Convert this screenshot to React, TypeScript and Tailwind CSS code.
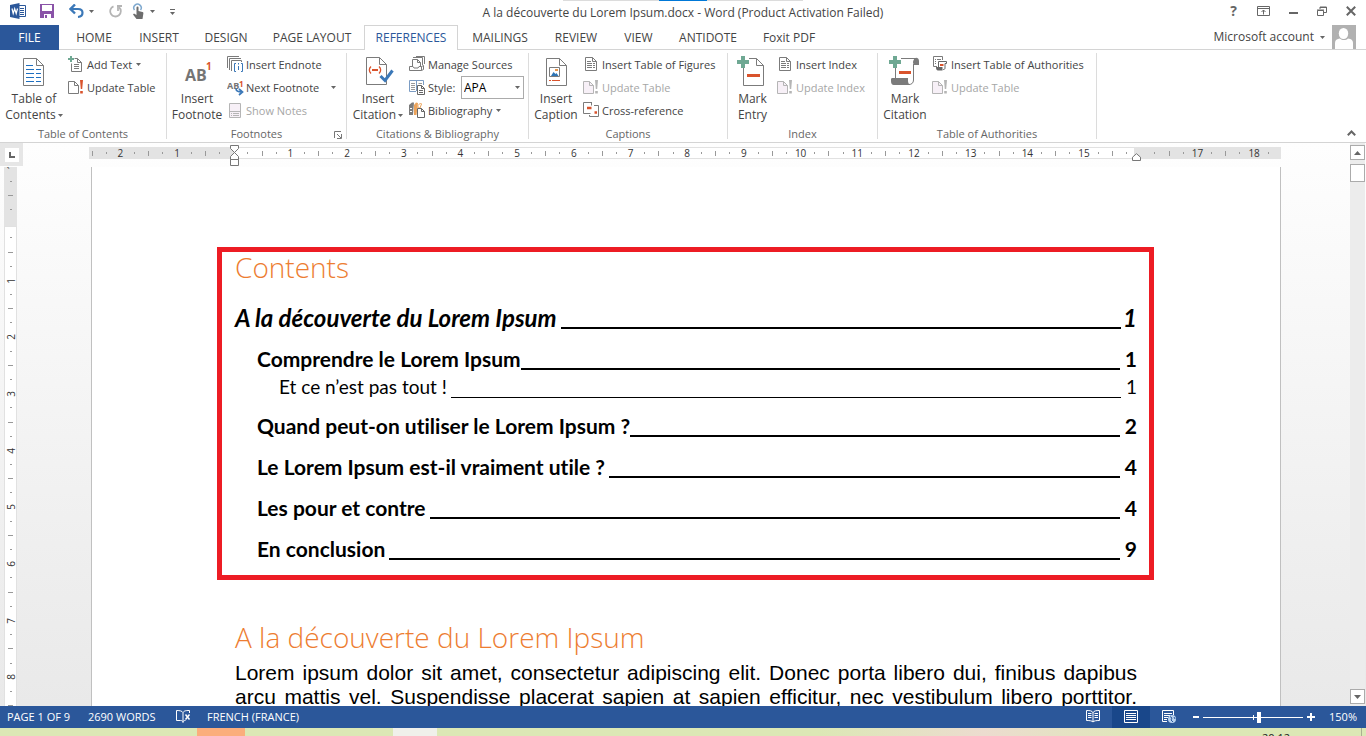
import type { ReactNode } from 'react';

const tabs = [
  { name: 'HOME', width: 'w-[64px]' },
  { name: 'INSERT', width: 'w-[66px]' },
  { name: 'DESIGN', width: 'w-[68px]' },
  { name: 'PAGE LAYOUT', width: 'w-[104px]' },
  { name: 'REFERENCES', width: 'w-[94px]' },
  { name: 'MAILINGS', width: 'w-[84px]' },
  { name: 'REVIEW', width: 'w-[68px]' },
  { name: 'VIEW', width: 'w-[57px]' },
  { name: 'ANTIDOTE', width: 'w-[82px]' },
  { name: 'Foxit PDF', width: 'w-[80px]' },
];

const toc = [
  { level: 1, title: 'A la découverte du Lorem Ipsum', page: 1, gap: true },
  { level: 2, title: 'Comprendre le Lorem Ipsum', page: 1, gap: false },
  { level: 3, title: 'Et ce n’est pas tout !', page: 1, gap: true },
  { level: 2, title: 'Quand peut-on utiliser le Lorem Ipsum ?', page: 2, gap: false },
  { level: 2, title: 'Le Lorem Ipsum est-il vraiment utile ?', page: 4, gap: true },
  { level: 2, title: 'Les pour et contre', page: 4, gap: true },
  { level: 2, title: 'En conclusion', page: 9, gap: true },
];

const levelStyles: Record<number, string> = {
  1: 'h-[41px] text-[24px] font-bold italic',
  2: 'h-[41px] pl-[22px] text-[21px] font-bold',
  3: 'h-[26px] pb-[10px] pl-[44px] text-[19px]',
};

// ---- Icons ----

function Svg({ w, h, children }: { w: number; h: number; children: ReactNode }) {
  return (
    <svg width={w} height={h} viewBox={`0 0 ${w} ${h}`} fill="none" className="shrink-0" aria-hidden="true">
      {children}
    </svg>
  );
}

function Caret() {
  return (
    <svg width="5" height="3" viewBox="0 0 5 3" className="shrink-0" aria-hidden="true">
      <path d="M0 0h5L2.5 3z" fill="#666" />
    </svg>
  );
}

function WordLogo() {
  return (
    <Svg w={16} h={17}>
      <path d="M8.5 2.5h7v11h-7z" fill="#fff" stroke="#2b579a" />
      <path d="M10 5.500h4M10 7.500h4M10 9.500h4M10 11.500h4" stroke="#2b579a" />
      <path d="M0 2l9.500-2v16L0 14z" fill="#2b579a" />
      <path d="M2 5.500l1.200 5 1.500-4.700 1.500 4.700 1.300-5" stroke="#fff" strokeWidth="1.200" />
    </Svg>
  );
}

function SaveIcon() {
  return (
    <Svg w={14} h={15}>
      <path d="M0 0h14v14H0z" fill="#8a53a8" />
      <path d="M2 1h10v6H2zM4 10h7v4H4z" fill="#fff" />
      <path d="M5 11h2v3H5z" fill="#8a53a8" />
    </Svg>
  );
}

function UndoIcon() {
  return (
    <Svg w={15} h={15}>
      <path d="M1.500 5h7.500c6 0 6 7.500 0 8" stroke="#3b78b8" strokeWidth="2.200" />
      <path d="M6 .5L1.500 5 6 9.500" stroke="#3b78b8" strokeWidth="2.400" />
    </Svg>
  );
}

function RepeatIcon() {
  return (
    <Svg w={14} h={15}>
      <path d="M4.500 2.300a5.300 5.300 0 1 0 5.500.9" stroke="#b5b5b5" strokeWidth="1.800" />
      <path d="M8 2h5M9 1.500V7" stroke="#b5b5b5" strokeWidth="1.800" />
    </Svg>
  );
}

function TouchIcon() {
  return (
    <Svg w={12} h={17}>
      <path d="M2.500 7a3.700 3.700 0 1 1 6 0" stroke="#7fa9cf" strokeWidth="1.500" />
      <path d="M4.500 4.500a1 1 0 0 1 2 0V8l4 1c1 .3 1 1 .8 2l-.8 5H4.500L1 11.500l1-1L4.500 12z" fill="#6d6d6d" />
    </Svg>
  );
}

function ContentsIcon() {
  return (
    <Svg w={22} h={28}>
      <path d="M.5.500h13l7 7v20H.5z" fill="#fff" stroke="#7b7b7b" />
      <path d="M13.500.5v7h7" stroke="#7b7b7b" />
      <path d="M3 7.500h7M3 11.500h8M3 15.500h8M3 19.500h8M3 23.500h8" stroke="#1f6fbf" />
      <path d="M13 11.500h5M13 15.500h5M13 19.500h5M13 23.500h5" stroke="#1f6fbf" />
    </Svg>
  );
}

function AddTextIcon() {
  return (
    <Svg w={17} h={17}>
      <path d="M6.500 2.500h3l4 4v9h-10v-8" stroke="#7b7b7b" />
      <path d="M9.500 2.500v4h4M6 8.500h5M6 10.500h5M6 12.500h5" stroke="#7b7b7b" />
      <path d="M3 0v6M0 3h6" stroke="#6fa893" strokeWidth="2" />
    </Svg>
  );
}

function UpdateIcon({ muted = false }: { muted?: boolean }) {
  return (
    <Svg w={17} h={15}>
      <path d="M.5 1.500h6l4 4v8H.5z" fill={muted ? '#f7f0f7' : '#fff'} stroke={muted ? '#b5b5b5' : '#7b7b7b'} />
      <path d="M6.500 1.500v4h4" stroke={muted ? '#b5b5b5' : '#7b7b7b'} />
      <path d="M12 0h3l-.8 9h-1.400zM12.200 11h2.600v2.500h-2.600z" fill={muted ? '#b5b5b5' : '#d9532c'} />
    </Svg>
  );
}

function FootnoteIcon() {
  return (
    <Svg w={30} h={26}>
      <text x="3" y="22" fontFamily="Open Sans, sans-serif" fontSize="16" fontWeight="700" fill="#757575">AB</text>
      <text x="24" y="11" fontFamily="Open Sans, sans-serif" fontSize="10" fontWeight="700" fill="#d9532c">1</text>
    </Svg>
  );
}

function EndnoteIcon() {
  return (
    <Svg w={17} h={17}>
      <path d="M.5 12V.5H12M2.500 14V2.500H14M4.500 15V4.500h10V6" stroke="#7b7b7b" />
      <path d="M9 7.500H7.500v8H9M14 7.500h1.500v8H14M11.500 7v1.500M11.500 10v4" stroke="#3b78b8" />
    </Svg>
  );
}

function NextFootnoteIcon() {
  return (
    <Svg w={17} h={17}>
      <text x="0" y="10" fontFamily="Open Sans, sans-serif" fontSize="9" fontWeight="700" fill="#757575">AB</text>
      <text x="12" y="8" fontFamily="Open Sans, sans-serif" fontSize="8" fontWeight="700" fill="#d9532c">1</text>
      <path d="M9 9.500c0 3 2 3.500 6 3.500M12 10l3.500 3-3.500 3" stroke="#3b78b8" strokeWidth="1.700" />
    </Svg>
  );
}

function NotesIcon() {
  return (
    <Svg w={13} h={15}>
      <path d="M.5.500h11v14H.5z" fill="#f7f0f7" stroke="#b5b5b5" />
      <path d="M0 8.500h12M2 10.500h1M4 10.500h6M2 12.500h1M4 12.500h6" stroke="#b5b5b5" />
    </Svg>
  );
}

function CitationIcon() {
  return (
    <Svg w={32} h={30}>
      <g transform="translate(4 0)">
        <path d="M.5.500h13l7 7v20H.5z" fill="#fff" stroke="#7b7b7b" />
        <path d="M13.500.5v7h7" stroke="#7b7b7b" />
        <path d="M5 9.500c-2.200 2-2.200 5 0 7M13 9.500c2.200 2 2.200 5 0 7" stroke="#d9532c" strokeWidth="1.300" />
        <path d="M6 13h6" stroke="#d9532c" strokeWidth="2" />
        <path d="M14.500 19l4.500 4.500 7.500-10" stroke="#3b78b8" strokeWidth="3" />
      </g>
    </Svg>
  );
}

function SourcesIcon() {
  return (
    <Svg w={17} h={17}>
      <path d="M3.500 10V3.500h5l3 3V10M8.500 3.500v3h3M4 1.500h9.500V9M7 .5h8.500V8" stroke="#7b7b7b" />
      <path d="M4 10.500H.5v4h12v-4H10l-1 1.500H5l-1-1.500M12.500 10.500l2-1v4l-2 1" stroke="#7b7b7b" />
    </Svg>
  );
}

function StyleIcon() {
  return (
    <Svg w={17} h={17}>
      <path d="M8 1.500H.5v11H7M7.500 2v10M8 1.500h6.500V6" stroke="#7b9cc4" />
      <path d="M2 4.500h4M2 6.500h4M2 8.500h4M2 10.500h4M9.500 4.500H13" stroke="#999" />
      <path d="M8.500 6.500h4l3 3v6h-7zM12.500 6.500v3h3M10 11.500h4M10 13.500h4" fill="#fff" stroke="#666" />
    </Svg>
  );
}

function BibliographyIcon() {
  return (
    <Svg w={17} h={17}>
      <path d="M0 3l3-2.500h2L4 13H0z" fill="#7b7b7b" />
      <path d="M1 6.500h2M1 9.500h2" stroke="#fff" />
      <path d="M5 3l2-2.500L9 1 7.500 13H5z" fill="#eca35a" />
      <path d="M9 3.500L11.500 1l1 1-1.500 4H9z" stroke="#eca35a" />
      <path d="M8.500 6.500h4l3 3v6h-7zM12.500 6.500v3h3" fill="#fff" stroke="#666" />
    </Svg>
  );
}

function CaptionIcon() {
  return (
    <Svg w={24} h={28}>
      <g transform="translate(2 0)">
        <path d="M.5.500h13l7 7v20H.5z" fill="#fff" stroke="#7b7b7b" />
        <path d="M13.500.5v7h7" stroke="#7b7b7b" />
        <path d="M3.500 9.500h10v9h-10z" fill="#fff" stroke="#7b7b7b" />
        <path d="M5 18l2.500-4 2 2 1-1 2 3z" fill="#2f75b5" />
        <path d="M9 11h3v2H9z" fill="#e8964a" />
        <path d="M3 22.500h2M6 22.500h8" stroke="#d9532c" />
      </g>
    </Svg>
  );
}

function FiguresIcon() {
  return (
    <Svg w={13} h={15}>
      <path d="M.5.500h7l4 4v9H.5z" fill="#fff" stroke="#7b7b7b" />
      <path d="M7.500.5v4h4M2 4.500h4M2 6.500h5M8 6.500h2M2 8.500h5M8 8.500h2M2 10.500h5M8 10.500h2" stroke="#7b7b7b" />
    </Svg>
  );
}

function CrossRefIcon() {
  return (
    <Svg w={17} h={17}>
      <path d="M9 .5H.5v11h7M11 3.500h4.500v11h-9V13M8.500.5v3" stroke="#7b7b7b" />
      <path d="M4 6h4.500M11.500 10.500H14" stroke="#d9532c" strokeWidth="2.500" />
    </Svg>
  );
}

function MarkEntryIcon() {
  return (
    <Svg w={31} h={32}>
      <path d="M12 2.500h7.500l7 7v20H6.500V12" stroke="#7b7b7b" />
      <path d="M19.500 2.500v7h7" stroke="#7b7b7b" />
      <path d="M6 0v12M0 6h12" stroke="#6fa893" strokeWidth="4" />
      <path d="M10 19.500h13" stroke="#d9532c" strokeWidth="3" />
    </Svg>
  );
}

function MarkCitationIcon() {
  return (
    <Svg w={32} h={32}>
      <path d="M12 2.500h14.500c-2 1-2 3-2 5V24c0 3-2 4.500-4.500 4.500H6M6.500 12v10" stroke="#7b7b7b" />
      <path d="M25 9V4c0-3 5-3 5 1v4zM2 23c0-1 1-1 2-1h15v3c0 2 1 3 2 4H6c-4 0-4-2-4-6z" fill="#7b7b7b" />
      <path d="M6 0v12M0 6h12" stroke="#6fa893" strokeWidth="4" />
      <path d="M10 16.500h12" stroke="#d9532c" strokeWidth="3" />
    </Svg>
  );
}

function AuthoritiesIcon() {
  return (
    <Svg w={15} h={17}>
      <path d="M4 10.500H.5V.5h9V4M2 3.500h1M4 3.500h4M2 5.500h1M2 7.500h1" stroke="#7b7b7b" />
      <path d="M5.500 11V5.500h8v2H12V12c0 1.500-1 1.500-2 1.500" stroke="#666" />
      <path d="M3 11h6.500v3.500H5C3.500 14.500 3 13 3 11z" fill="#666" />
      <path d="M7 9h3.500" stroke="#d9532c" strokeWidth="2" />
    </Svg>
  );
}

// ---- Ribbon ----

function Group({ label, width, launcher, children }: { label: string; width: string; launcher?: boolean; children: ReactNode }) {
  return (
    <section className={`flex flex-col border-r border-[#dcdcdc] ${width}`}>
      <div className="flex h-[75px] shrink-0 items-start">{children}</div>
      <div className="relative text-center text-[11px] leading-[11px] text-[#666]">
        {label}
        {launcher && (
          <button aria-label={`${label} options`} className="absolute right-[4px] top-[3px]">
            <Svg w={8} h={8}>
              <path d="M.5 7V.5H7M3 3l4 4M7.500 3v4.500H3" stroke="#777" />
            </Svg>
          </button>
        )}
      </div>
    </section>
  );
}

function BigButton({ icon, lines, width, caret }: { icon: ReactNode; lines: [string, string]; width: string; caret?: boolean }) {
  return (
    <button className={`flex shrink-0 flex-col items-center text-[12px] leading-[16px] ${width}`}>
      <span className="flex h-[38px] items-center justify-center">{icon}</span>
      <span>{lines[0]}</span>
      <span className="flex items-center gap-[2px] whitespace-nowrap">
        {lines[1]}
        {caret && <Caret />}
      </span>
    </button>
  );
}

function SmallButton({ icon, label, caret, disabled }: { icon: ReactNode; label: string; caret?: boolean; disabled?: boolean }) {
  return (
    <button disabled={disabled} className="flex h-[23px] items-center gap-[2px] whitespace-nowrap disabled:text-[#a6a6a6]">
      <span className="flex w-[17px] justify-center">{icon}</span>
      <span className="pt-px">{label}</span>
      {caret && <span className="pl-[2px]"><Caret /></span>}
    </button>
  );
}

function Column({ children }: { children: ReactNode }) {
  return <div className="flex flex-col items-start text-[11px]">{children}</div>;
}

function Ribbon() {
  return (
    <div className="flex h-[93px] shrink-0 border-b border-[#d4d4d4] bg-white py-[3px] text-[#444]">
      <Group label="Table of Contents" width="w-[167px]">
        <BigButton icon={<ContentsIcon />} lines={['Table of', 'Contents']} width="w-[68px]" caret />
        <Column>
          <SmallButton icon={<AddTextIcon />} label="Add Text" caret />
          <SmallButton icon={<UpdateIcon />} label="Update Table" />
        </Column>
      </Group>
      <Group label="Footnotes" width="w-[180px]" launcher>
        <BigButton icon={<FootnoteIcon />} lines={['Insert', 'Footnote']} width="w-[60px]" />
        <Column>
          <SmallButton icon={<EndnoteIcon />} label="Insert Endnote" />
          <div className="flex items-center gap-3">
            <SmallButton icon={<NextFootnoteIcon />} label="Next Footnote" />
            <Caret />
          </div>
          <SmallButton icon={<NotesIcon />} label="Show Notes" disabled />
        </Column>
      </Group>
      <Group label="Citations & Bibliography" width="w-[182px]">
        <BigButton icon={<CitationIcon />} lines={['Insert', 'Citation']} width="w-[62px]" caret />
        <Column>
          <SmallButton icon={<SourcesIcon />} label="Manage Sources" />
          <div className="flex h-[23px] items-center gap-[2px]">
            <span className="flex w-[17px] justify-center"><StyleIcon /></span>
            <label htmlFor="style" className="w-[31px] pt-px">Style:</label>
            <div className="relative">
              <select id="style" className="h-[23px] w-[63px] appearance-none border border-[#ababab] bg-white pl-[2px] text-[12px] text-black">
                <option>APA</option>
              </select>
              <span className="pointer-events-none absolute right-[4px] top-[10px]"><Caret /></span>
            </div>
          </div>
          <SmallButton icon={<BibliographyIcon />} label="Bibliography" caret />
        </Column>
      </Group>
      <Group label="Captions" width="w-[199px]">
        <BigButton icon={<CaptionIcon />} lines={['Insert', 'Caption']} width="w-[54px]" />
        <Column>
          <SmallButton icon={<FiguresIcon />} label="Insert Table of Figures" />
          <SmallButton icon={<UpdateIcon muted />} label="Update Table" disabled />
          <SmallButton icon={<CrossRefIcon />} label="Cross-reference" />
        </Column>
      </Group>
      <Group label="Index" width="w-[150px]">
        <BigButton icon={<MarkEntryIcon />} lines={['Mark', 'Entry']} width="w-[49px]" />
        <Column>
          <SmallButton icon={<FiguresIcon />} label="Insert Index" />
          <SmallButton icon={<UpdateIcon muted />} label="Update Index" disabled />
        </Column>
      </Group>
      <Group label="Table of Authorities" width="w-[219px]">
        <BigButton icon={<MarkCitationIcon />} lines={['Mark', 'Citation']} width="w-[54px]" />
        <Column>
          <SmallButton icon={<AuthoritiesIcon />} label="Insert Table of Authorities" />
          <SmallButton icon={<UpdateIcon muted />} label="Update Table" disabled />
        </Column>
      </Group>
      <button aria-label="Collapse ribbon" className="mb-[3px] ml-auto mr-[10px] self-end">
        <Svg w={9} h={6}>
          <path d="M.8 5.200l3.700-3.700 3.700 3.700" stroke="#666" strokeWidth="2" />
        </Svg>
      </button>
    </div>
  );
}

function TitleBar() {
  return (
    <header className="relative flex h-[25px] shrink-0 items-center bg-white">
      <div className="absolute left-[563px] top-0 flex h-px w-[240px] justify-center bg-[#dcdcdc]">
        <div className="h-px w-12 bg-[#0078d7]" />
      </div>
      <div className="flex flex-1 items-center pb-[3px] pl-[10px]">
        <WordLogo />
        <button aria-label="Save" className="ml-[14px]"><SaveIcon /></button>
        <button aria-label="Undo" className="ml-[15px] flex items-center gap-[5px]"><UndoIcon /><Caret /></button>
        <button aria-label="Repeat" className="ml-[15px]"><RepeatIcon /></button>
        <button aria-label="Touch mode" className="ml-[9px] flex items-center gap-[6px]"><TouchIcon /><Caret /></button>
        <button aria-label="Customize toolbar" className="ml-[15px]">
          <Svg w={5} h={7}>
            <path d="M0 1.500h5" stroke="#666" />
            <path d="M0 4h5L2.500 7z" fill="#666" />
          </Svg>
        </button>
      </div>
      <h1 className="text-[12px] text-[#444]">A la découverte du Lorem Ipsum.docx - Word (Product Activation Failed)</h1>
      <div className="flex flex-1 items-center justify-end gap-[19px] pb-[3px] pr-[10px] text-[#666]">
        <button className="w-[9px] text-[14px] font-bold leading-none">?</button>
        <button aria-label="Ribbon display options">
          <Svg w={13} h={10}>
            <path d="M.5.500h12v9H.5zM0 2.500h13M6.500 8.500V4M4.500 6l2-2 2 2" stroke="#666" />
          </Svg>
        </button>
        <button aria-label="Minimize"><Svg w={9} h={10}><path d="M0 7h9" stroke="#666" strokeWidth="2" /></Svg></button>
        <button aria-label="Restore">
          <Svg w={10} h={10}>
            <path d="M.5 4.500h6v5h-6zM0 4h7M3 3V1h6.500v5.500H7M3 1.500h6.500" stroke="#666" />
          </Svg>
        </button>
        <button aria-label="Close"><Svg w={10} h={10}><path d="M.8.8l8.400 8.400M9.200.8L.8 9.200" stroke="#666" strokeWidth="2" /></Svg></button>
      </div>
    </header>
  );
}

function TabBar() {
  return (
    <nav className="flex h-[25px] shrink-0 bg-white text-[12px] text-[#444]">
      <button className="w-[59px] bg-[#2b579a] pt-px text-white">FILE</button>
      <div className="w-[3px] border-b border-[#d4d4d4]" />
      {tabs.map((tab) => (
        <button
          key={tab.name}
          className={`whitespace-nowrap ${tab.width} ${
            tab.name === 'REFERENCES'
              ? 'border-x border-t border-[#d4d4d4] text-[#2b579a]'
              : 'border-b border-[#d4d4d4] pt-0.5'
          }`}
        >
          {tab.name}
        </button>
      ))}
      <div className="flex flex-1 items-center justify-end gap-[7px] border-b border-[#d4d4d4] pr-[10px]">
        <button className="flex items-center gap-[6px]">
          Microsoft account
          <Caret />
        </button>
        <Svg w={24} h={24}>
          <path d="M0 0h24v24H0z" fill="#b1b1b1" />
          <path d="M3 24v-6c0-3 2-4 5-4.500 2 2 6 2 8 0 3 .5 5 1.500 5 4.500v6z" fill="#fff" />
          <ellipse cx="11.500" cy="8.500" rx="4.700" ry="5.500" fill="#fff" />
        </Svg>
      </div>
    </nav>
  );
}

// ---- Rulers: one mark for each quarter of a centimetre ----

const across = Array.from({ length: 84 }, (_, i) => i - 10);
const down = Array.from({ length: 39 }, (_, i) => i - 4);

function HorizontalRuler() {
  return (
    <div className="relative mr-[2px] mt-1 flex h-[12px] w-[1192px] shrink-0">
      <div className="w-[145px] bg-[#e3e3e3]" />
      <div className="flex-1 border-y border-[#e1e1e1] bg-white" />
      <div className="w-[147px] bg-[#e3e3e3]" />
      <div className="absolute inset-0 flex items-center justify-between pl-[3px] pr-[12px] text-[10px] leading-none text-[#333]">
        {across.map((q) => (
          <span key={q} className="flex w-0 justify-center">
            {q % 4 === 0
              ? q !== 0 && q !== 64 && <span>{Math.abs(q / 4)}</span>
              : <span className={q % 2 === 0 ? 'h-[5px] w-px shrink-0 bg-[#999]' : 'h-[2px] w-px shrink-0 bg-[#999]'} />}
          </span>
        ))}
      </div>
      <div className="absolute left-[141px] top-[-2px]">
        <Svg w={9} h={22}>
          <path d="M.5.500h8v3l-4 4-4-4zM4.500 7.500l4 4v3h-8v-3zM.5 14.500h8v6h-8z" fill="#fff" stroke="#777" />
        </Svg>
      </div>
      <div className="absolute right-[140px] top-[6px]">
        <Svg w={9} h={8}>
          <path d="M4.500.7l4 3.500v3.300h-8V4.200z" fill="#fff" stroke="#777" />
        </Svg>
      </div>
    </div>
  );
}

function VerticalRuler() {
  return (
    <div className="flex w-[23px] shrink-0 flex-col">
      <div className="flex h-[23px] items-center justify-center bg-[#e6e6e6]">
        <button aria-label="Tab selector" className="flex h-[14px] w-[14px] items-center justify-center bg-white">
          <Svg w={6} h={6}><path d="M1 0v5h5" stroke="#666" strokeWidth="2" /></Svg>
        </button>
      </div>
      <div className="relative ml-[4px] mt-px flex w-[13px] flex-1 flex-col">
        <div className="h-[59px] bg-[#e3e3e3]" />
        <div className="flex-1 border border-b-0 border-[#e1e1e1] bg-white" />
        <div className="absolute inset-0 flex flex-col items-center justify-between overflow-hidden text-[10px] leading-none text-[#333]">
          {down.map((q) => (
            <span key={q} className="flex h-0 items-center">
              {q % 4 === 0
                ? q !== 0 && <span className="rotate-180 [writing-mode:vertical-rl]">{Math.abs(q / 4)}</span>
                : <span className={q % 2 === 0 ? 'h-px w-[5px] bg-[#999]' : 'h-px w-[2px] bg-[#999]'} />}
            </span>
          ))}
        </div>
      </div>
    </div>
  );
}

function ScrollBar() {
  return (
    <div className="mr-px flex w-[15px] shrink-0 flex-col bg-[#ececec] pt-[2px]">
      <button aria-label="Scroll up" className="flex h-[15px] items-center justify-center border border-[#ababab] bg-white">
        <Svg w={7} h={4}><path d="M0 4h7L3.500 0z" fill="#666" /></Svg>
      </button>
      <div className="mt-1 h-[18px] border border-[#ababab] bg-white" />
      <button aria-label="Scroll down" className="mb-[2px] mt-auto flex h-[15px] items-center justify-center border border-[#ababab] bg-white">
        <Svg w={7} h={4}><path d="M0 0h7L3.500 4z" fill="#666" /></Svg>
      </button>
    </div>
  );
}

function Document() {
  return (
    <article className="mt-2 w-[1190px] flex-1 border-x border-[#c0c0c0] bg-white px-[143px] pt-[80px] font-['Lato',sans-serif] text-black">
      <div className="-ml-[18px] -mr-[17px] h-[333px] border-[5px] border-[#ed1c24] pl-[13px] pr-[12px]">
        <h2 className="mb-[14px] font-['Open_Sans',sans-serif] text-[28px] font-light leading-[31px] text-[#ed7d31]">Contents</h2>
        {toc.map((row) => (
          <a
            key={row.title}
            href="#"
            className={`flex items-center leading-[26px] [font-variant-ligatures:none] ${levelStyles[row.level]}`}
          >
            <span>{row.title}</span>
            <span
              className={`mt-[20px] flex-1 border-black ${row.level === 3 ? 'border-b' : 'border-b-2'} ${row.gap ? 'ml-[4px]' : ''} ${row.level === 1 ? 'mr-[2px]' : 'mr-[5px]'}`}
            />
            <span>{row.page}</span>
          </a>
        ))}
      </div>
      <h2 className="mt-[40px] font-['Open_Sans',sans-serif] text-[28px] font-light leading-[34px] text-[#ed7d31]">
        A la découverte du Lorem Ipsum
      </h2>
      <p className="mt-[7px] text-justify font-['Liberation_Sans',sans-serif] text-[21px] leading-[24px] [text-align-last:justify]">
        Lorem ipsum dolor sit amet, consectetur adipiscing elit. Donec porta libero dui, finibus dapibus
        arcu mattis vel. Suspendisse placerat sapien at sapien efficitur, nec vestibulum libero porttitor.
      </p>
    </article>
  );
}

function StatusBar() {
  return (
    <footer className="flex h-[22px] shrink-0 items-center bg-[#2b579a] pl-[7px] pr-[9px] text-[11px] text-white">
      <span className="w-[81px]">PAGE 1 OF 9</span>
      <span className="w-[88px]">2690 WORDS</span>
      <button aria-label="Proofing errors" className="w-[31px]">
        <Svg w={15} h={14}>
          <path d="M7 2.500C6 1 4 .5.500.5v10h4c1.500 0 2.500.5 2.500 2 0-1.500 1-2 2.500-2M7 2.500v9M7 2.500C8 1 9 .5 13.500.5V3" stroke="#fff" />
          <path d="M9.500 4.500l4 5M13.500 4.500l-4 5" stroke="#fff" strokeWidth="1.500" />
        </Svg>
      </button>
      <span>FRENCH (FRANCE)</span>
      <div className="ml-auto flex h-full items-center">
        <button aria-label="Read mode" className="flex h-full w-[38px] items-center justify-center">
          <Svg w={14} h={14}>
            <path d="M7 2.500C6 .8 4 .5.500.5v10c3.500 0 5.500.3 6.500 1.500 1-1.200 3-1.500 6.500-1.500V.5C10 .5 8 .8 7 2.500zM7 2v10M2 3.500h3.500M2 5.500h3.500M2 7.500h3.500M8.500 3.500H12M8.500 5.500H12M8.500 7.500H12" stroke="#fff" />
          </Svg>
        </button>
        <button aria-label="Print layout" className="flex h-full w-[38px] items-center justify-center bg-[#19478a]">
          <Svg w={14} h={14}>
            <path d="M.5.500h13v12H.5zM2 3.500h10M2 5.500h10M2 7.500h10M2 9.500h10" stroke="#fff" />
          </Svg>
        </button>
        <button aria-label="Web layout" className="flex h-full w-[38px] items-center justify-center">
          <Svg w={14} h={14}>
            <path d="M5 11.500H.5V.5h11V5M2 3.500h8M2 5.500h6M2 7.500h4M2 9.500h3" stroke="#fff" />
            <circle cx="10" cy="9" r="4" fill="#b9d2ee" />
            <path d="M8 6.500l2 1.500-1 2 2 2M12 7l1 2" stroke="#2b579a" />
          </Svg>
        </button>
        <button aria-label="Zoom out" className="ml-[5px] h-[2px] w-[6px] bg-white" />
        <div className="relative mx-[4px] flex items-center">
          <div className="absolute left-[50px] h-[5px] w-px bg-white" />
          <input
            type="range"
            aria-label="Zoom"
            defaultValue={56}
            className="h-px w-[100px] appearance-none bg-white [&::-webkit-slider-thumb]:h-[11px] [&::-webkit-slider-thumb]:w-[4px] [&::-webkit-slider-thumb]:appearance-none [&::-webkit-slider-thumb]:bg-white"
          />
        </div>
        <button aria-label="Zoom in"><Svg w={8} h={8}><path d="M4 0v8M0 4h8" stroke="#fff" strokeWidth="2" /></Svg></button>
        <span className="w-[42px] text-right">150%</span>
      </div>
    </footer>
  );
}

function Taskbar() {
  return (
    <div className="flex h-[8px] shrink-0 overflow-hidden bg-linear-to-r from-[#dce8b5] from-60% via-[#ecdccf] via-72% to-[#dce8b5] to-85%">
      <div className="ml-[197px] h-full w-[48px] bg-[#fbae7c]" />
      <div className="ml-[148px] h-full w-[44px] bg-[#f0f0ea]" />
      <span className="ml-auto mr-[71px] mt-[4px] text-[11px] leading-[11px] text-[#222]">20:12</span>
      <div className="mr-[4px] h-full w-px bg-[#aab090]" />
    </div>
  );
}

export default function App() {
  return (
    <div className="flex h-screen flex-col overflow-hidden bg-white font-['Open_Sans',sans-serif]">
      <TitleBar />
      <TabBar />
      <Ribbon />
      <main className="flex min-h-0 flex-1 overflow-hidden bg-linear-to-b from-[#fefefe] to-[#e9e9e9]">
        <VerticalRuler />
        <div className="flex min-w-0 flex-1 flex-col items-center overflow-hidden pr-px">
          <HorizontalRuler />
          <Document />
        </div>
        <ScrollBar />
      </main>
      <StatusBar />
      <Taskbar />
    </div>
  );
}
